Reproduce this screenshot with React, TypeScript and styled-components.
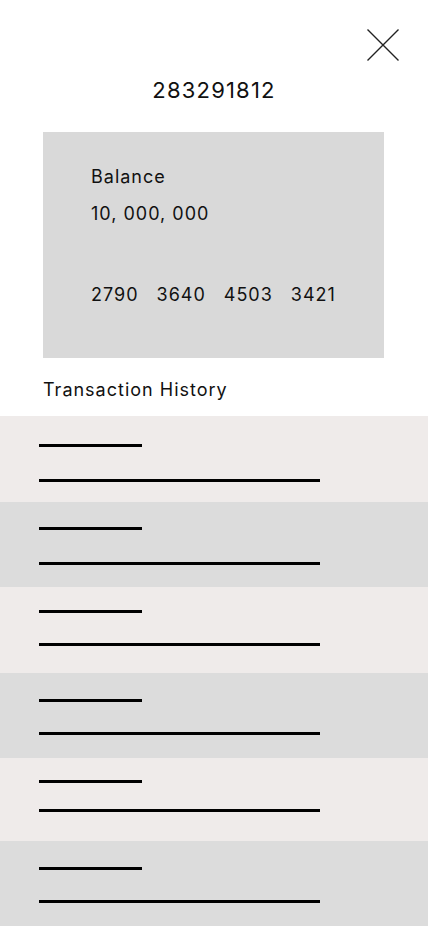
import React from "react";
import styled, { createGlobalStyle } from "styled-components";

const GlobalStyle = createGlobalStyle`
  html, body {
    margin: 0;
    padding: 0;
    background: #ffffff;
  }
  body {
    font-family: Inter, "Noto Sans", sans-serif;
    color: #111111;
  }
`;

const Page = styled.div`
  width: 428px;
  min-height: 926px;
  display: flex;
  flex-direction: column;
  background: #ffffff;
  overflow: hidden;
`;

const TopBar = styled.div`
  display: flex;
  justify-content: flex-end;
  padding: 29px 29px 0 0;
`;

const CloseButton = styled.button`
  width: 32px;
  height: 32px;
  padding: 0;
  border: none;
  background: transparent;
  display: flex;
  cursor: pointer;
`;

const AccountNumber = styled.h1`
  margin: 15px 0 0;
  font-size: 22px;
  line-height: 28px;
  font-weight: 400;
  letter-spacing: 1.2px;
  text-align: center;
  color: #111111;
`;

const Card = styled.section`
  margin: 28px 44px 0 43px;
  height: 226px;
  box-sizing: border-box;
  background: #d9d9d9;
  padding: 34px 48px 0 48px;
  display: flex;
  flex-direction: column;
`;

const CardText = styled.div<{ $gap?: number }>`
  font-size: 18px;
  line-height: 22px;
  letter-spacing: 1px;
  color: #111111;
  margin-top: ${(p) => p.$gap ?? 0}px;
`;

const CardNumber = styled.div`
  margin-top: 59px;
  display: flex;
  gap: 18px;
  font-size: 18px;
  line-height: 22px;
  letter-spacing: 1px;
  color: #111111;
`;

const SectionTitle = styled.h2`
  margin: 21px 0 0 43px;
  font-size: 18px;
  line-height: 22px;
  font-weight: 400;
  letter-spacing: 1px;
  color: #111111;
`;

const List = styled.ul`
  list-style: none;
  margin: 15px 0 0;
  padding: 0;
  display: flex;
  flex-direction: column;
`;

const Row = styled.li<{ $alt: boolean; $h: number; $top: number; $gap: number }>`
  height: ${(p) => p.$h}px;
  box-sizing: border-box;
  background: ${(p) => (p.$alt ? "#dcdcdc" : "#efebea")};
  padding: ${(p) => p.$top}px 0 0 39px;
  display: flex;
  flex-direction: column;
  gap: ${(p) => p.$gap}px;
`;

const Bar = styled.span<{ $w: number }>`
  display: block;
  width: ${(p) => p.$w}px;
  height: 3px;
  background: #000000;
`;

const rows = [
  { h: 86, top: 28, gap: 32 },
  { h: 85, top: 25, gap: 32 },
  { h: 86, top: 23, gap: 30 },
  { h: 85, top: 26, gap: 30 },
  { h: 83, top: 22, gap: 26 },
  { h: 85, top: 26, gap: 30 },
];

export default function App() {
  return (
    <>
      <GlobalStyle />
      <Page>
        <TopBar>
          <CloseButton aria-label="Close">
            <svg width="32" height="32" viewBox="0 0 32 32" fill="none">
              <path d="M0.5 0.5 L31.5 31.5 M31.5 0.5 L0.5 31.5" stroke="#222222" strokeWidth="1.4" />
            </svg>
          </CloseButton>
        </TopBar>
        <AccountNumber>283291812</AccountNumber>
        <Card>
          <CardText>Balance</CardText>
          <CardText $gap={15}>10, 000, 000</CardText>
          <CardNumber>
            <span>2790</span>
            <span>3640</span>
            <span>4503</span>
            <span>3421</span>
          </CardNumber>
        </Card>
        <SectionTitle>Transaction History</SectionTitle>
        <List>
          {rows.map((r, i) => (
            <Row key={i} $alt={i % 2 === 1} $h={r.h} $top={r.top} $gap={r.gap}>
              <Bar $w={103} />
              <Bar $w={281} />
            </Row>
          ))}
        </List>
      </Page>
    </>
  );
}
